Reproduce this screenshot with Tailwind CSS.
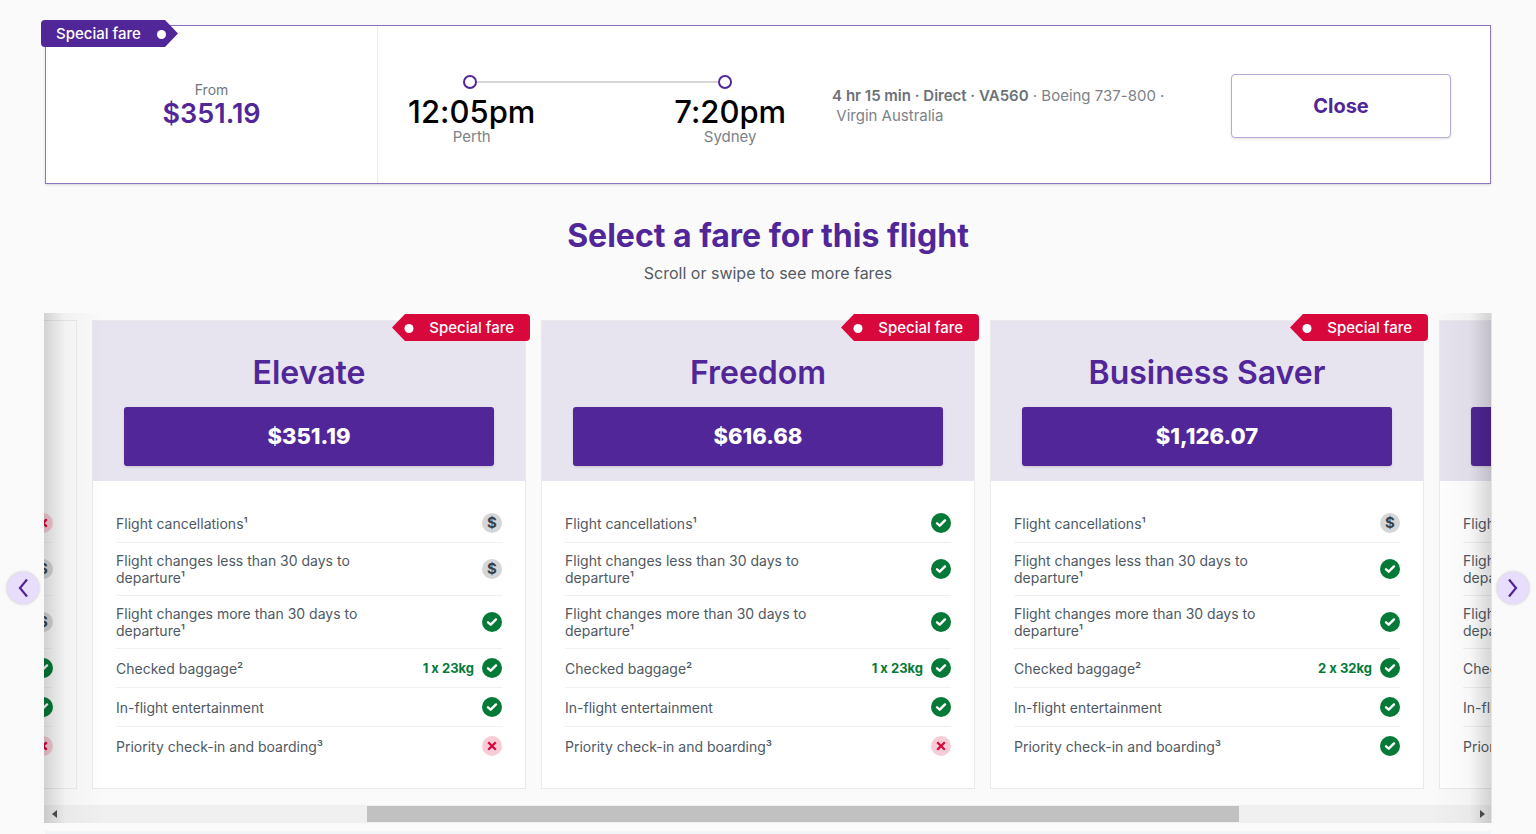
<!DOCTYPE html>
<html lang="en">
<head>
<meta charset="utf-8">
<meta name="viewport" content="width=device-width, initial-scale=1">
<title>Select a fare</title>
<script src="https://cdn.jsdelivr.net/npm/@tailwindcss/browser@4"></script>
</head>
<body class="bg-[#fafafa] font-[Inter,sans-serif] text-[#4f5963] overflow-x-hidden [font-feature-settings:'calt'_0]">
<main class="pt-[25px]">

  <!-- Selected flight summary -->
  <section class="relative mx-[45px] flex border border-[#8f75c0] bg-white shadow-sm">
    <div class="absolute -left-[5px] -top-[6px] flex h-[27px] items-center">
      <span class="flex h-full items-center rounded-l bg-[#512698] pt-px pl-[15px] text-[15px] font-medium text-white">Special fare</span>
      <svg class="h-[27px] w-[37px]" viewBox="0 0 37 27" aria-hidden="true"><path d="M0 0H24L37 13.500 24 27H0Z" fill="#512698"/><circle cx="20.500" cy="14.500" r="4.500" fill="#fff"/></svg>
    </div>
    <div class="w-[23%] shrink-0 border-r border-[#ececee] pt-[54px] pb-[55px] text-center">
      <p class="text-sm leading-5 text-[#70777d]">From</p>
      <p class="text-[27px] leading-7 font-semibold text-[#512698]">$351.19</p>
    </div>
    <div class="flex grow items-start justify-between pl-[30px] pr-[39px] pt-12">
      <div class="flex items-start gap-[46px]">
        <div class="w-[378px]">
          <div class="ml-[55px] mr-[54px] flex h-[15px] items-center">
            <span class="size-[14px] rounded-full border-2 border-[#512698]"></span>
            <span class="h-[2px] grow bg-[#d6d6d6]"></span>
            <span class="size-[14px] rounded-full border-2 border-[#512698]"></span>
          </div>
          <div class="flex justify-between pt-[5px] text-center">
            <div>
              <p class="text-[31px] leading-[35px] font-medium text-black">12:05pm</p>
              <p class="text-[15px] leading-4 text-[#7c8287]">Perth</p>
            </div>
            <div>
              <p class="text-[31px] leading-[35px] font-medium text-black">7:20pm</p>
              <p class="text-[15px] leading-4 text-[#7c8287]">Sydney</p>
            </div>
          </div>
        </div>
        <p class="pt-3 text-[15px] leading-5 text-[#7c8287]"><strong class="font-semibold text-[#6b7277]">4 hr 15 min · Direct · VA560</strong> · Boeing 737-800 ·<br>&nbsp;Virgin Australia</p>
      </div>
      <button type="button" class="h-16 w-[220px] rounded border border-[#b9a8da] bg-white text-xl font-bold text-[#512698] shadow-sm">Close</button>
    </div>
  </section>

  <h1 class="pt-8 text-center text-[32px] leading-10 font-bold text-[#512698]">Select a fare for this flight</h1>
  <p class="pt-[5px] pb-7 text-center text-base leading-6 text-[#555b61]">Scroll or swipe to see more fares</p>

  <!-- Fare carousel -->
  <section class="relative mx-[44px]" aria-label="Fares">
    <div class="overflow-hidden">
      <div id="fares" class="flex justify-center gap-[15px] pr-5 pt-[7px] pb-4"></div>
      <div class="flex h-[18px] items-center bg-[#f0f0f0]">
        <button type="button" aria-label="Scroll left" class="flex w-5 justify-center"><svg class="h-2 w-[5px]" viewBox="0 0 5 8"><path d="M5 0V8L0 4Z" fill="#505050"/></svg></button>
        <div class="flex grow justify-center"><div class="ml-[70px] h-4 w-[872px] bg-[#c1c1c1]"></div></div>
        <button type="button" aria-label="Scroll right" class="flex w-5 justify-center"><svg class="h-2 w-[5px]" viewBox="0 0 5 8"><path d="M0 0V8L5 4Z" fill="#505050"/></svg></button>
      </div>
    </div>
    <div class="pointer-events-none absolute inset-y-0 left-0 w-[62px] bg-linear-to-r from-black/16 via-black/3 via-35% to-black/0"></div>
    <div class="pointer-events-none absolute inset-y-0 right-0 w-[62px] border-r border-[#e4e4e4] bg-linear-to-l from-black/16 via-black/3 via-35% to-black/0"></div>
    <button type="button" aria-label="Previous fares" class="absolute -left-[37px] top-[259px] flex size-8 items-center justify-center rounded-full bg-[#e9ddfd] shadow-[0_0_3px_rgba(0,0,0,0.25)]"><svg class="h-5 w-[10px]" viewBox="0 0 10 20" fill="none" stroke="#512698" stroke-width="2.200"><path d="M9 1.500 2 10 9 18.500"/></svg></button>
    <button type="button" aria-label="Next fares" class="absolute -right-[37px] top-[259px] flex size-8 items-center justify-center rounded-full bg-[#e9ddfd] shadow-[0_0_3px_rgba(0,0,0,0.25)]"><svg class="h-5 w-[10px]" viewBox="0 0 10 20" fill="none" stroke="#512698" stroke-width="2.200"><path d="M1 1.500 8 10 1 18.500"/></svg></button>
  </section>

  <div class="mx-[45px] mt-2 h-[3px] bg-[#f1f5f8]"></div>
</main>

<script>
const icons = {
  yes: '<svg class="size-5 shrink-0" viewBox="0 0 20 20" role="img" aria-label="Included"><circle cx="10" cy="10" r="10" fill="#057a38"/><path d="M6 10.300 8.700 12.700 14 7.400" fill="none" stroke="#fff" stroke-width="2.400" stroke-linecap="round" stroke-linejoin="round"/></svg>',
  no: '<svg class="size-5 shrink-0" viewBox="0 0 20 20" role="img" aria-label="Not included"><circle cx="10" cy="10" r="10" fill="#f7ccd6"/><path d="M6.200 6.200 13.800 13.800M13.800 6.200 6.200 13.800" fill="none" stroke="#d8083d" stroke-width="2.300"/></svg>',
  fee: '<span class="flex size-5 shrink-0 items-center justify-center rounded-full bg-[#d6d6d6] text-[15px] leading-5 font-bold text-[#36414a]">$</span>'
};
const features = [
  'Flight cancellations¹',
  'Flight changes less than 30 days to departure¹',
  'Flight changes more than 30 days to departure¹',
  'Checked baggage²',
  'In-flight entertainment',
  'Priority check-in and boarding³'
];
const fares = [
  { soldOut: true, marks: ['no', 'fee', 'fee', 'yes', 'yes', 'no'] },
  { name: 'Elevate', price: '$351.19', bag: '1 x 23kg', special: true, marks: ['fee', 'fee', 'yes', 'yes', 'yes', 'no'] },
  { name: 'Freedom', price: '$616.68', bag: '1 x 23kg', special: true, marks: ['yes', 'yes', 'yes', 'yes', 'yes', 'no'] },
  { name: 'Business Saver', price: '$1,126.07', bag: '2 x 32kg', special: true, marks: ['fee', 'yes', 'yes', 'yes', 'yes', 'yes'] },
  { name: '', price: '', marks: ['yes', 'yes', 'yes', 'yes', 'yes', 'yes'] }
];
const badge = `<div class="absolute -right-[5px] -top-[7px] flex h-[27px] items-center">
  <svg class="h-[27px] w-[37px]" viewBox="0 0 37 27" aria-hidden="true"><path d="M37 0H13L0 13.500 13 27H37Z" fill="#d8083d"/><circle cx="17" cy="14.500" r="4.500" fill="#fff"/></svg>
  <span class="flex h-full items-center rounded-r bg-[#d8083d] pt-px pr-4 text-[15px] font-medium text-white">Special fare</span></div>`;

document.getElementById('fares').innerHTML = fares.map(f => `
  <article class="relative flex w-[434px] shrink-0 flex-col border border-[#e9e9ee] ${f.soldOut ? 'bg-[#fafafa]' : 'bg-white'}">
    ${f.special ? badge : ''}
    ${f.soldOut ? '<div class="h-40"></div>' : `<div class="px-[31px] pt-8 pb-[15px] bg-[#e7e3ef]">
      <h2 class="h-10 text-center text-[32px] leading-10 font-semibold text-[#512698]">${f.name}</h2>
      <button type="button" aria-label="Select fare ${f.price}" class="mt-[14px] block h-[59px] w-full rounded-[3px] bg-[#512698] text-[22px] font-extrabold text-white shadow-sm">${f.price}</button>
    </div>`}
    <ul class="px-[23px] pt-[23px] pb-[23px]">
      ${features.map((t, i) => `<li class="flex items-center justify-between border-b border-[#f0f0f2] py-[9px] text-sm leading-[17px] last:border-b-0">
        <span class="w-[270px]">${f.soldOut ? (t.length > 40 ? '&nbsp;<br>&nbsp;' : '') : t}</span>
        <span class="flex items-center gap-2 font-bold text-[13px] text-[#057a38]">${i === 3 && f.bag ? f.bag : ''}${icons[f.marks[i]]}</span></li>`).join('')}
    </ul>
  </article>`).join('');
</script>
</body>
</html>
